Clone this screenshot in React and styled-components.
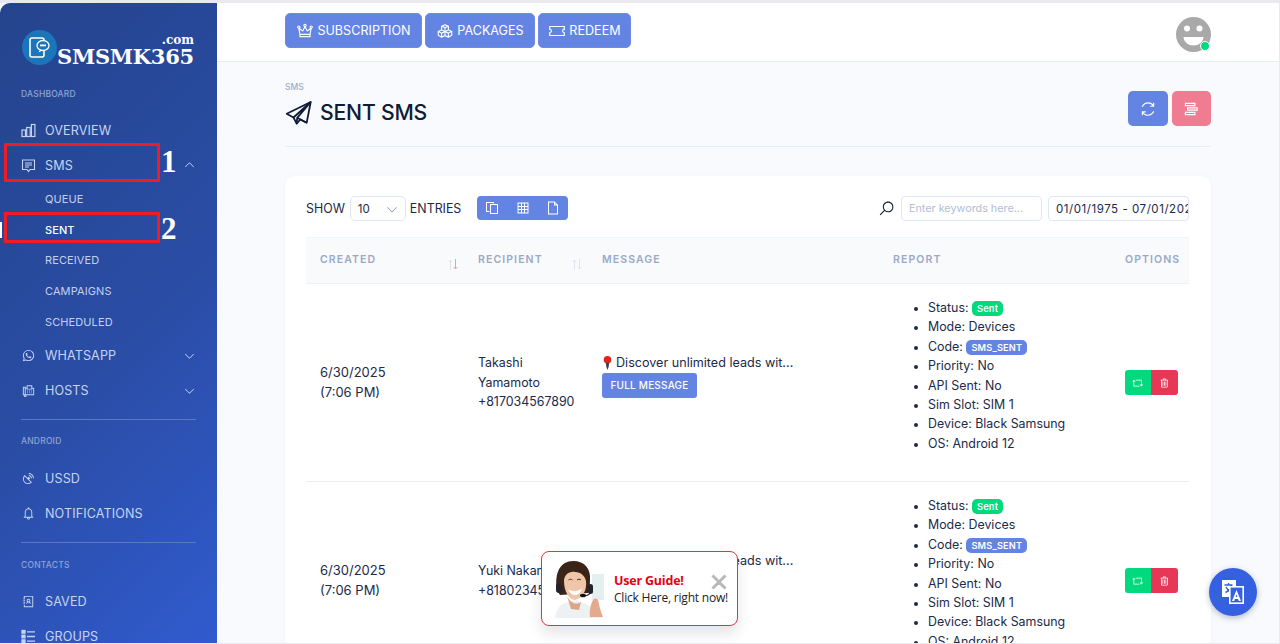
import React from "react";
import styled, { createGlobalStyle } from "styled-components";
import {
  LiaWhatsapp, LiaFaxSolid, LiaSatelliteDishSolid, LiaBell,
  LiaAddressBook, LiaCrownSolid, LiaCubesSolid, LiaTicketAltSolid,
  LiaSyncSolid, LiaStreamSolid, LiaCopy, LiaTableSolid, LiaFile,
  LiaSearchSolid, LiaRetweetSolid, LiaTrashAlt, LiaAngleDownSolid, LiaAngleUpSolid, LiaTimesSolid,
} from "react-icons/lia";

const Global = createGlobalStyle`
  html, body { margin: 0; height: 100%; overflow: hidden; background: #e9eaef; }
  * { box-sizing: border-box; }
  body { font-family: Inter, "Noto Sans", sans-serif; color: #1b2a4a; }
`;

const Shell = styled.div`
  position: relative;
  width: 1279px;
  height: 640px;
  margin-top: 3px;
  display: grid;
  grid-template-columns: 217px 1fr;
  overflow: hidden;
  background: #f9fafd;
`;

const Sidebar = styled.aside`
  background: linear-gradient(135deg, #25448d 0%, #2a4da6 55%, #315bcf 100%);
  border-top-left-radius: 10px;
  padding: 28px 21px 0;
  overflow: hidden;
  display: flex;
  flex-direction: column;
`;
const Logo = styled.div`
  flex: none;
  display: flex;
  align-items: flex-end;
  height: 34px;
  margin-left: 1px;
  margin-bottom: 23px;
`;
const LogoText = styled.div`
  display: flex;
  flex-direction: column;
  align-items: flex-end;
  font-family: "DejaVu Serif", serif;
  font-weight: 700;
  color: #fff;
  line-height: 1;
`;
const LogoCom = styled.span`
  font-size: 12px;
  line-height: 12px;
  margin-bottom: 2px;
`;
const LogoName = styled.span`
  font-size: 21px;
  line-height: 17px;
  letter-spacing: -0.25px;
`;
const SectionLabel = styled.div`
  flex: none;
  font-size: 8.5px;
  font-weight: 500;
  letter-spacing: 0.2px;
  color: #8ea3d3;
  line-height: 12px;
  height: 12px;
  margin-bottom: ${p => p.$after || 0}px;
`;
const NavItem = styled.div`
  flex: none;
  height: 35px;
  display: flex;
  align-items: center;
  font-size: 12.6px;
  font-weight: 400;
  letter-spacing: 0.1px;
  color: #c6d4f2;
  svg.lead { width: 15px; height: 15px; margin-right: 9px; flex: none; }
  svg.chev { width: 11px; height: 11px; margin-left: auto; margin-right: 1px; }
`;
const SubList = styled.div`
  flex: none;
  display: flex;
  flex-direction: column;
  padding: 1px 0 1px 24px;
`;
const SubItem = styled.div`
  height: 30.7px;
  display: flex;
  align-items: center;
  font-size: 11px;
  letter-spacing: 0.1px;
  font-weight: ${p => (p.$active ? 500 : 400)};
  color: ${p => (p.$active ? "#ffffff" : "#c2d0f0")};
`;
const ActiveMark = styled.span`
  position: absolute;
  left: 0;
  top: 219px;
  width: 2px;
  height: 16px;
  background: #fff;
`;
const Divider = styled.div`
  flex: none;
  height: 1px;
  width: 175px;
  background: #5a78c4;
  margin: ${p => p.$m};
`;

const Main = styled.main`
  min-width: 0;
  display: flex;
  flex-direction: column;
`;
const TopBar = styled.header`
  height: 59px;
  flex: none;
  background: #fff;
  border-bottom: 1px solid #e8edf5;
  padding: 10px 68px 0 68px;
  display: flex;
  align-items: flex-start;
  gap: 3.25px;
`;
const TopButton = styled.button`
  width: ${p => p.$w}px;
  height: 35px;
  border: 1px solid #6c8ae6;
  border-radius: 5px;
  background: #6484e4;
  color: #fff;
  font: 400 12.6px Inter, sans-serif;
  display: flex;
  align-items: center;
  justify-content: center;
  gap: 3px;
  padding: 0;
  svg { width: 18px; height: 18px; }
`;
const Avatar = styled.div`
  position: relative;
  margin-left: auto;
  margin-top: 4px;
  width: 35px;
  height: 35px;
`;
const OnlineDot = styled.span`
  position: absolute;
  right: 1px;
  bottom: 1px;
  width: 10px;
  height: 10px;
  border-radius: 50%;
  background: #00d97e;
  border: 1.5px solid #fff;
`;
const Content = styled.div`
  padding: 0 68px;
  flex: 1;
  min-height: 0;
`;
const PageHead = styled.div`
  height: 85px;
  border-bottom: 1px solid #e6edf7;
  display: flex;
  justify-content: space-between;
  padding-top: 19px;
`;
const Crumb = styled.div`
  font-size: 8.5px;
  line-height: 12px;
  font-weight: 500;
  color: #9eaecb;
`;
const Title = styled.h1`
  margin: 5px 0 0;
  display: flex;
  align-items: center;
  gap: 8px;
  font-size: 21.2px;
  line-height: 28px;
  font-weight: 500;
  letter-spacing: -0.2px;
  color: #0e1c36;
`;
const HeadActions = styled.div`
  display: flex;
  gap: 4px;
  margin-top: 10px;
`;
const SquareBtn = styled.button`
  width: 39.5px;
  height: 35px;
  border: none;
  border-radius: 5px;
  background: ${p => p.$c};
  color: #fff;
  display: flex;
  align-items: center;
  justify-content: center;
  padding: 0;
  svg { width: 18px; height: 18px; }
`;
const Card = styled.section`
  margin-top: 29px;
  background: #fff;
  border-radius: 10px 10px 0 0;
  padding: 20px 22px 0 21px;
  height: 470px;
  overflow: hidden;
  box-shadow: 0 1px 6px rgba(30, 60, 120, 0.03);
`;
const Controls = styled.div`
  display: flex;
  align-items: center;
  height: 25px;
  font-size: 12.4px;
  color: #1b2a4a;
`;
const FakeSelect = styled.div`
  width: 56px;
  height: 25px;
  margin: 0 4px 0 5px;
  border: 1px solid #e0e7f3;
  border-radius: 5px;
  display: flex;
  align-items: center;
  justify-content: space-between;
  padding: 0 7px;
  font-size: 11.5px;
  svg { width: 12px; height: 12px; color: #8393ad; }
`;
const BtnGroup = styled.div`
  width: 91px;
  height: 24px;
  margin-left: 16px;
  align-self: flex-start;
  background: #6484e4;
  border-radius: 4px;
  display: grid;
  grid-template-columns: repeat(3, 1fr);
  align-items: center;
  justify-items: center;
  color: #fff;
  svg { width: 16px; height: 16px; }
`;
const SearchIcon = styled(LiaSearchSolid)`
  width: 17px;
  height: 17px;
  margin-left: auto;
  margin-right: 6px;
  color: #0e1c36;
`;
const TextBox = styled.div`
  width: 141px;
  height: 25px;
  border: 1px solid #e0e7f3;
  border-radius: 4px;
  padding: 0 7px;
  display: flex;
  align-items: center;
  white-space: nowrap;
  overflow: hidden;
  font-size: ${p => (p.$ph ? 10.8 : 11.5)}px;
  letter-spacing: ${p => (p.$ph ? 0 : 0.55)}px;
  color: ${p => (p.$ph ? "#b1bdd4" : "#1b2a4a")};
  margin-left: ${p => p.$ml || 0}px;
`;
const TableWrap = styled.div`
  margin-top: 16px;
  overflow: hidden;
`;
const Table = styled.table`
  width: 890px;
  border-collapse: collapse;
  table-layout: fixed;
  line-height: 19.4px;
`;
const Th = styled.th`
  position: relative;
  height: 46px;
  width: ${p => p.$w}px;
  background: #f9fafc;
  border-top: 1px solid #f1f4f9;
  border-bottom: 1px solid #edf0f6;
  padding: 0 0 1px 14px;
  text-align: left;
  font-size: 10.5px;
  font-weight: 600;
  letter-spacing: 1.1px;
  color: #9aa9c6;
`;
const SortMark = styled.span`
  position: absolute;
  right: ${p => p.$r}px;
  top: 21px;
  display: flex;
  svg { width: 5px; height: 11px; display: block; }
`;
const Td = styled.td`
  padding: 0 0 ${p => p.$pb || 0}px 14px;
  height: 198px;
  font-size: ${p => p.$fs || 12.4}px;
  vertical-align: middle;
  border-bottom: 1px solid #e9edf4;
  color: #1b2a4a;
`;
const Message = styled.div`
  display: flex;
  align-items: center;
  white-space: nowrap;
  svg { width: 11px; height: 14px; margin-right: 3px; flex: none; }
`;
const SmallBtn = styled.button`
  display: block;
  width: 95px;
  height: 25px;
  border: none;
  border-radius: 3px;
  background: #6484e4;
  color: #fff;
  font: 500 10px Inter, sans-serif;
  letter-spacing: 0.2px;
  padding: 0 0 1px;
`;
const ReportList = styled.ul`
  margin: 0 0 14px;
  padding-left: 35px;
  li::marker { font-size: 11px; }
`;
const Badge = styled.span`
  display: inline-block;
  height: 15.5px;
  line-height: 15.5px;
  padding: 0 5px;
  border-radius: 5px;
  font-size: 9.2px;
  font-weight: 600;
  letter-spacing: 0.2px;
  color: #fff;
  background: ${p => p.$c};
`;
const OptionGroup = styled.div`
  display: inline-flex;
  border-radius: 3px;
  overflow: hidden;
`;
const OptionBtn = styled.span`
  width: 26.25px;
  height: 25px;
  background: ${p => p.$c};
  color: #fff;
  display: flex;
  align-items: center;
  justify-content: center;
  svg { width: 12px; height: 12px; }
`;

const Annot = styled.div`
  position: absolute;
  left: 4px;
  width: 156px;
  top: ${p => p.$t}px;
  height: ${p => p.$h}px;
  border: 3px solid #ee1c25;
`;
const AnnotNum = styled.span`
  position: absolute;
  left: 161px;
  top: ${p => p.$t}px;
  font: 700 31px/34px "Liberation Serif", serif;
  color: #fff;
`;
const Popup = styled.div`
  position: absolute;
  left: 541px;
  top: 548px;
  width: 197px;
  height: 75px;
  background: #fff;
  border: 1px solid #e3343a;
  border-radius: 8px;
  box-shadow: 0 8px 14px rgba(30, 40, 70, 0.12);
  display: flex;
  align-items: center;
  padding: 0 0 0 10px;
  font-family: "Open Sans", "Noto Sans", sans-serif;
`;
const PopupText = styled.div`
  margin-left: 7px;
  display: flex;
  flex-direction: column;
  white-space: nowrap;
  letter-spacing: -0.2px;
`;
const PopupTitle = styled.span`
  font-size: 12.5px;
  line-height: 17px;
  font-weight: 700;
  color: #e60012;
`;
const PopupSub = styled.span`
  font-size: 12px;
  line-height: 17px;
  color: #222;
`;
const PopupClose = styled(LiaTimesSolid)`
  position: absolute;
  left: 167px;
  top: 20px;
  width: 20px;
  height: 20px;
  color: #b8b8b8;
  stroke: #b8b8b8;
  stroke-width: 2.6px;
`;
const Fab = styled.div`
  position: absolute;
  left: 1209px;
  top: 565px;
  width: 48px;
  height: 48px;
  border-radius: 50%;
  background: #3560e0;
  box-shadow: 0 2px 6px rgba(20, 40, 100, 0.3);
  display: flex;
  align-items: center;
  justify-content: center;
`;

const LogoMark = () => (
  <svg width="35" height="35" viewBox="0 0 35 35" style={{ flex: "none" }}>
    <circle cx="17.500" cy="17.500" r="17.500" fill="#1b75bb" />
    <rect x="8" y="8" width="14" height="19" rx="2" fill="none" stroke="#fff" strokeWidth="1.600" />
    <ellipse cx="21" cy="15.500" rx="6" ry="5" fill="#1b75bb" stroke="#fff" strokeWidth="1.300" />
    <path d="M18 19.500l-1.500 3 4-2z" fill="#fff" />
    <rect x="18" y="14.500" width="6" height="1.800" fill="#fff" />
  </svg>
);
const Smiley = () => (
  <svg width="35" height="35" viewBox="0 0 35 35">
    <circle cx="17.500" cy="17.500" r="17.500" fill="#a9a9a9" />
    <circle cx="11" cy="11.500" r="3" fill="#fff" />
    <circle cx="23.500" cy="11.500" r="3" fill="#fff" />
    <path d="M7.500 20h20c-.5 5.500-5 8.500-10 8.500s-9.500-3-10-8.500z" fill="#fff" />
  </svg>
);
const Pin = () => (
  <svg viewBox="0 0 11 14">
    <circle cx="5.500" cy="3.800" r="3.800" fill="#e0241b" />
    <path d="M3.800 7h3.400l-.6 4-1.100 3-1.100-3z" fill="#3a3f46" />
  </svg>
);
const BarsIcon = () => (
  <svg className="lead" viewBox="0 0 15 15" fill="none" stroke="currentColor" strokeWidth="1.200">
    <rect x="1" y="7" width="3.500" height="6.500" />
    <rect x="5.700" y="4.500" width="3.500" height="9" />
    <rect x="10.400" y="1.500" width="3.500" height="12" />
  </svg>
);
const MessageIcon = () => (
  <svg className="lead" viewBox="0 0 15 15" fill="none" stroke="currentColor" strokeWidth="1.100">
    <path d="M1.500 2h12v9.500H9L7.500 13.500 6 11.500H1.500z" />
    <path d="M4 5h7M4 7h7M4 9h4" />
  </svg>
);
const GroupsIcon = () => (
  <svg className="lead" viewBox="0 0 15 15" fill="none" stroke="currentColor" strokeWidth="1.300">
    <rect x="1" y="1.500" width="3" height="2.600" fill="currentColor" />
    <rect x="1" y="6.200" width="3" height="2.600" fill="currentColor" />
    <rect x="1" y="10.900" width="3" height="2.600" fill="currentColor" />
    <path d="M6 2.800h8M6 7.500h8M6 12.200h8" />
  </svg>
);
const PlaneIcon = () => (
  <svg width="27" height="27" viewBox="0 0 27 27" fill="none" stroke="#0e1c36" strokeWidth="1.800" strokeLinejoin="round">
    <path d="M25.700 3 1.700 14.700 8.500 18.500 11.700 24.700 15.300 20.500 21.700 23.700z" />
    <path d="M25.700 3 8.500 18.500M25.700 3 12.200 18.800 11.700 24.700M12.200 18.800 21.700 23.700" />
  </svg>
);
const Arrow = ({ up, c }) => (
  <svg viewBox="0 0 5 11">
    <path d={up ? "M2.500 11V1M.7 3l1.800-2 1.800 2" : "M2.500 0v10M.7 8l1.800 2 1.800-2"} fill="none" stroke={c} strokeWidth="1" />
  </svg>
);
const Sort = ({ r, down }) => (
  <SortMark $r={r}>
    <Arrow up c="#dfe4ec" />
    <Arrow c={down} />
  </SortMark>
);
const Translate = () => (
  <svg width="22" height="24" viewBox="0 0 22 24">
    <rect x="0" y="0" width="14" height="17" fill="#fff" />
    <path d="M2.500 5h8M6.500 3v2M9.500 5c-1 4-3 6-6 7.500M4 7c1 2.500 2.500 4 5 5" stroke="#3560e0" strokeWidth="1.400" fill="none" />
    <rect x="7.800" y="6.800" width="13.400" height="16.400" fill="#3560e0" stroke="#fff" strokeWidth="1.600" />
    <path d="M10 21l4.500-11 4.500 11h-2.200l-.7-2h-3.200l-.7 2zM13.600 17h1.800l-.9-2.800z" fill="#fff" fillRule="evenodd" />
  </svg>
);
const Portrait = () => (
  <svg width="55" height="58" viewBox="0 0 55 58" style={{ flex: "none" }}>
    <rect x="40" y="14" width="12" height="26" fill="#e4f0ef" />
    <path d="M3 58c1-9 5-14 13-16l8-2 10 4 8 5 8 9z" fill="#eef1f3" />
    <path d="M15 36c3 6 8 10 14 6l-2 8-8-1z" fill="#dca686" />
    <path d="M5 30C2 12 9 1 21 1s18 8 17 19c0 5-1 9-2 13l-28 2z" fill="#3a2418" />
    <path d="M12 21c0-6 5-10 11-9 6 0 10 4 11 9 1 9-3 17-11 19-6 0-11-9-11-19z" fill="#f0c6a8" />
    <path d="M16 29c3 3 11 3 14-1-1 5-4 7-7 7s-6-3-7-6z" fill="#fff" />
    <path d="M16.500 20c1-1 3-1 4 0M25 20c1-1 3-1 4 0" stroke="#4a2c1c" strokeWidth="1" fill="none" />
    <rect x="4" y="23" width="6" height="10" rx="3" fill="#23242b" />
    <rect x="36" y="24" width="5" height="10" rx="2.500" fill="#23242b" />
    <path d="M38 33c-1 2-4 3-8 3" stroke="#222" strokeWidth="1.200" fill="none" />
    <ellipse cx="31" cy="35.500" rx="3" ry="1.800" fill="#111" />
    <path d="M38 57c-1-7 1-13 3-17 1-2 4-2 5 0 1 4 2 10 5 17z" fill="#e3ab8d" />
  </svg>
);

const reports = ["Mode: Devices", "Code:", "Priority: No", "API Sent: No", "Sim Slot: SIM 1", "Device: Black Samsung", "OS: Android 12"];
const Row = ({ name, number }) => (
  <tr>
    <Td $fs={13}>6/30/2025<br />(7:06 PM)</Td>
    <Td>{name}<br />{number}</Td>
    <Td $fs={12.6} $pb={14}>
      <Message><Pin />Discover unlimited leads wit...</Message>
      <SmallBtn>FULL MESSAGE</SmallBtn>
    </Td>
    <Td>
      <ReportList>
        <li>Status: <Badge $c="#00d97e">Sent</Badge></li>
        {reports.map(t => (
          <li key={t}>{t}{t === "Code:" && <> <Badge $c="#6484e4">SMS_SENT</Badge></>}</li>
        ))}
      </ReportList>
    </Td>
    <Td>
      <OptionGroup>
        <OptionBtn $c="#00d97e"><LiaRetweetSolid /></OptionBtn>
        <OptionBtn $c="#e63757"><LiaTrashAlt /></OptionBtn>
      </OptionGroup>
    </Td>
  </tr>
);

export default function App() {
  return (
    <>
      <Global />
      <Shell>
        <Sidebar>
          <Logo>
            <LogoMark />
            <LogoText>
              <LogoCom>.com</LogoCom>
              <LogoName>SMSMK365</LogoName>
            </LogoText>
          </Logo>
          <SectionLabel $after={12.5}>DASHBOARD</SectionLabel>
          <NavItem><BarsIcon />OVERVIEW</NavItem>
          <NavItem><MessageIcon />SMS<LiaAngleUpSolid className="chev" /></NavItem>
          <SubList>
            <SubItem>QUEUE</SubItem>
            <SubItem $active>SENT</SubItem>
            <SubItem>RECEIVED</SubItem>
            <SubItem>CAMPAIGNS</SubItem>
            <SubItem>SCHEDULED</SubItem>
          </SubList>
          <NavItem><LiaWhatsapp className="lead" />WHATSAPP<LiaAngleDownSolid className="chev" /></NavItem>
          <NavItem><LiaFaxSolid className="lead" />HOSTS<LiaAngleDownSolid className="chev" /></NavItem>
          <Divider $m="11.5px 0 15px" />
          <SectionLabel $after={13.5}>ANDROID</SectionLabel>
          <NavItem><LiaSatelliteDishSolid className="lead" />USSD</NavItem>
          <NavItem><LiaBell className="lead" />NOTIFICATIONS</NavItem>
          <Divider $m="11.5px 0 16px" />
          <SectionLabel $after={12.5}>CONTACTS</SectionLabel>
          <NavItem><LiaAddressBook className="lead" />SAVED</NavItem>
          <NavItem><GroupsIcon />GROUPS</NavItem>
        </Sidebar>
        <Main>
          <TopBar>
            <TopButton $w={137}><LiaCrownSolid />SUBSCRIPTION</TopButton>
            <TopButton $w={109.5}><LiaCubesSolid />PACKAGES</TopButton>
            <TopButton $w={93}><LiaTicketAltSolid />REDEEM</TopButton>
            <Avatar><Smiley /><OnlineDot /></Avatar>
          </TopBar>
          <Content>
            <PageHead>
              <div>
                <Crumb>SMS</Crumb>
                <Title><PlaneIcon />SENT SMS</Title>
              </div>
              <HeadActions>
                <SquareBtn $c="#6484e4"><LiaSyncSolid /></SquareBtn>
                <SquareBtn $c="#ef7c90"><LiaStreamSolid /></SquareBtn>
              </HeadActions>
            </PageHead>
            <Card>
              <Controls>
                SHOW
                <FakeSelect>10<LiaAngleDownSolid /></FakeSelect>
                ENTRIES
                <BtnGroup><LiaCopy /><LiaTableSolid /><LiaFile /></BtnGroup>
                <SearchIcon />
                <TextBox $ph>Enter keywords here...</TextBox>
                <TextBox $ml={6}>01/01/1975 - 07/01/2025</TextBox>
              </Controls>
              <TableWrap>
                <Table>
                  <thead>
                    <tr>
                      <Th $w={158}>CREATED<Sort r={6} down="#e9a0ad" /></Th>
                      <Th $w={124}>RECIPIENT<Sort r={6} down="#dfe4ec" /></Th>
                      <Th $w={291}>MESSAGE</Th>
                      <Th $w={232}>REPORT</Th>
                      <Th $w={85}>OPTIONS</Th>
                    </tr>
                  </thead>
                  <tbody>
                    <Row name="Takashi Yamamoto" number="+817034567890" />
                    <Row name="Yuki Nakamura" number="+818023456789" />
                  </tbody>
                </Table>
              </TableWrap>
            </Card>
          </Content>
        </Main>
        <ActiveMark />
        <Annot $t={140} $h={39} />
        <Annot $t={209} $h={31} />
        <AnnotNum $t={142}>1</AnnotNum>
        <AnnotNum $t={209}>2</AnnotNum>
        <Popup>
          <Portrait />
          <PopupText>
            <PopupTitle>User Guide!</PopupTitle>
            <PopupSub>Click Here, right now!</PopupSub>
          </PopupText>
          <PopupClose />
        </Popup>
        <Fab><Translate /></Fab>
      </Shell>
    </>
  );
}
